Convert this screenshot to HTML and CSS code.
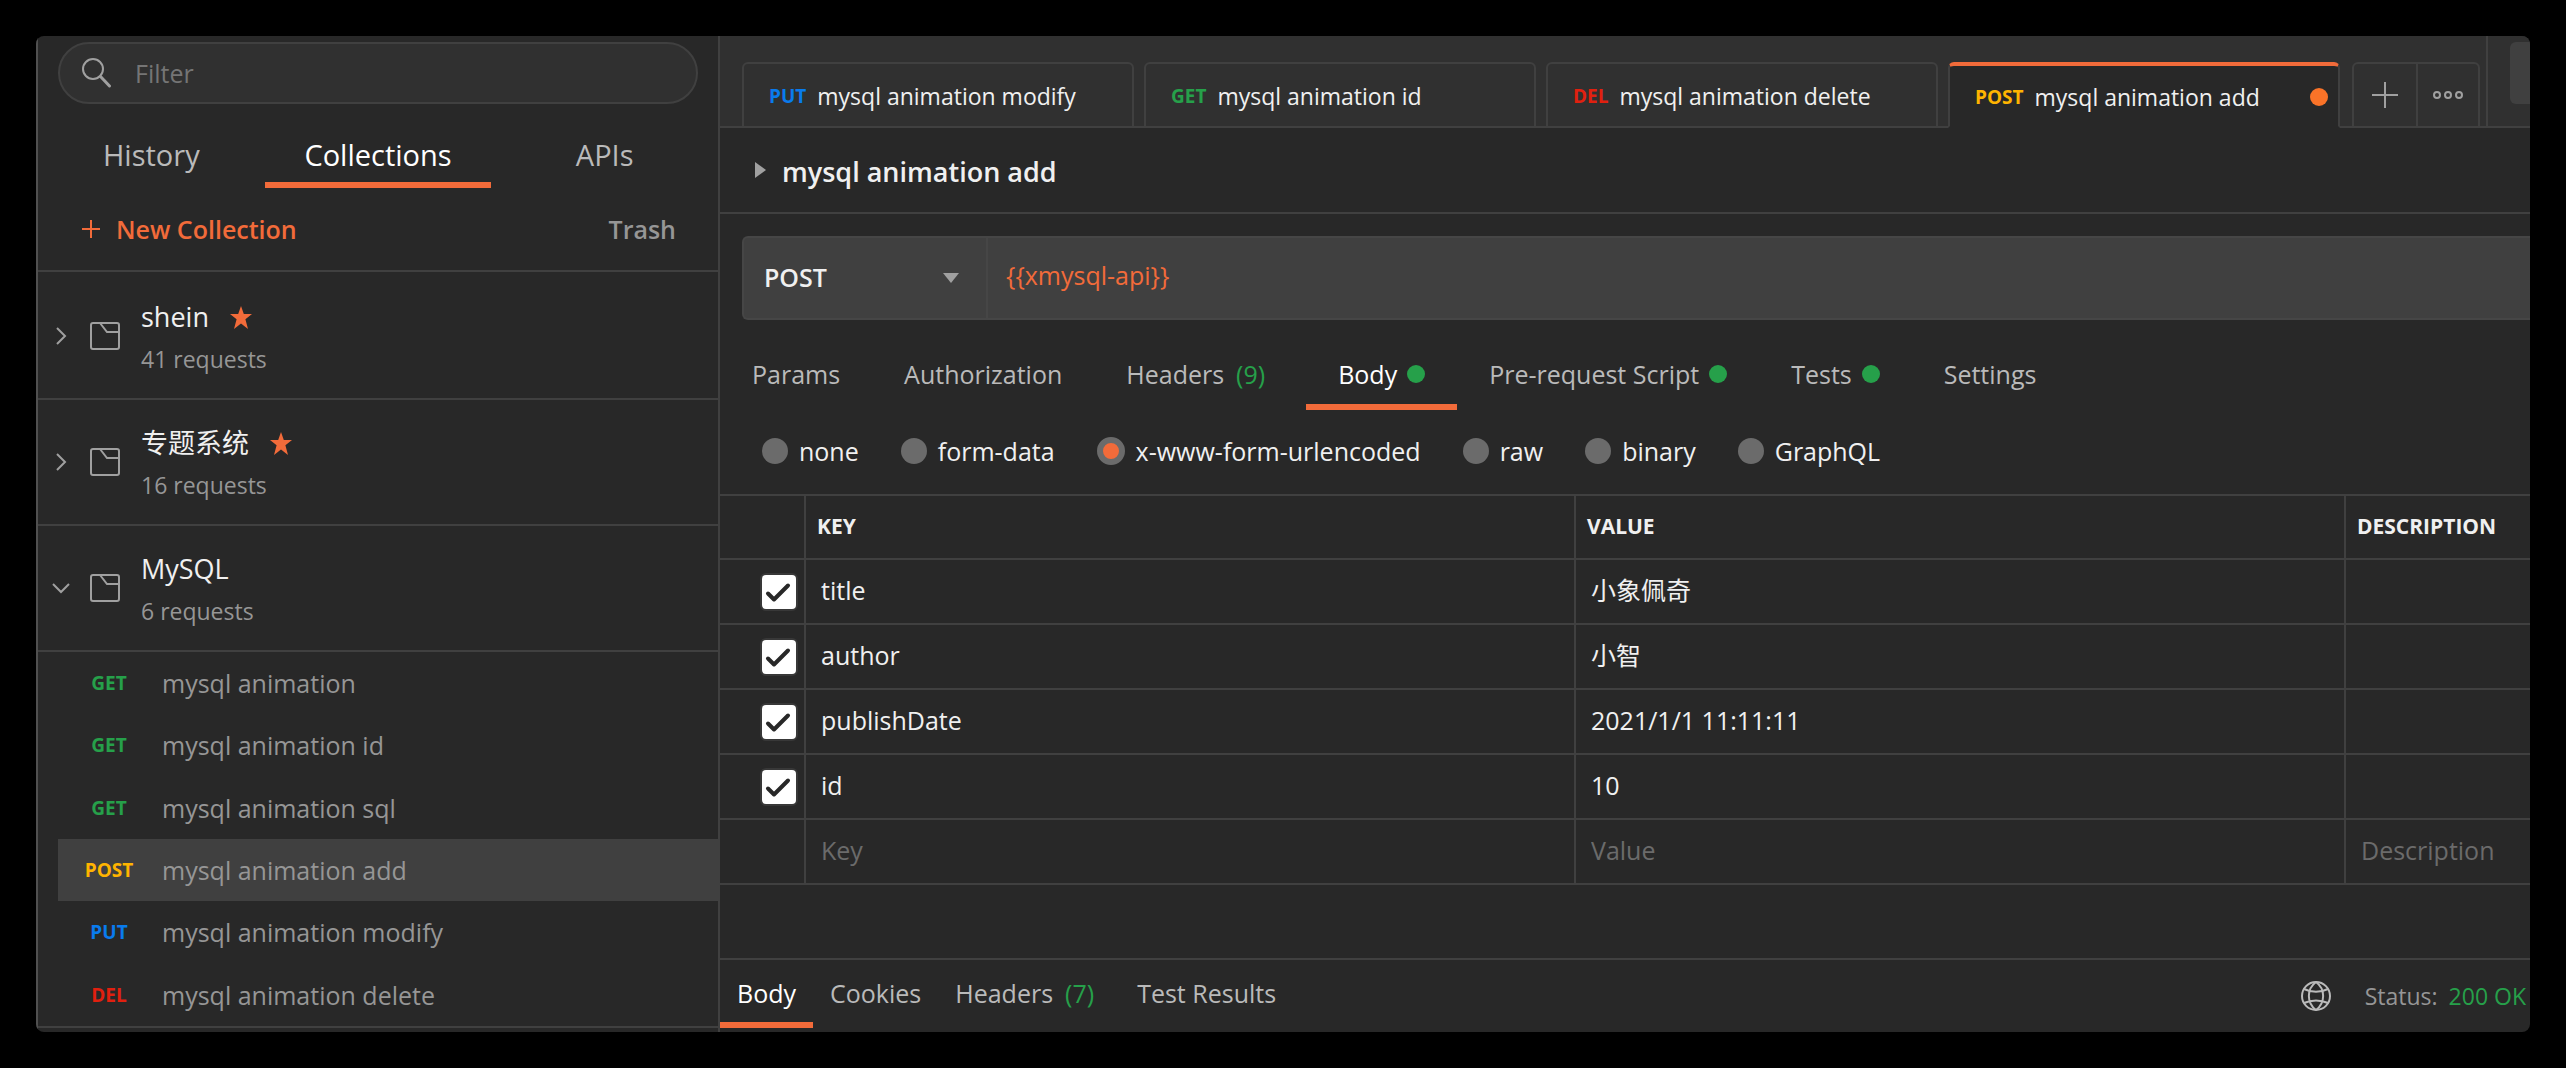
FILE: index.html
```html
<!DOCTYPE html>
<html lang="en">
<head>
<meta charset="utf-8">
<meta name="viewport" content="width=device-width, initial-scale=1">
<title>mysql animation add</title>
<link rel="stylesheet" href="styles.css">
</head>
<body>
<svg class="sprite" aria-hidden="true">
  <symbol id="folder" viewBox="0 0 30 28"><path d="M3 1h24a2 2 0 0 1 2 2v22a2 2 0 0 1-2 2H3a2 2 0 0 1-2-2V3a2 2 0 0 1 2-2zM10 1l7 9h12" fill="none" stroke="currentColor" stroke-width="2"/></symbol>
  <symbol id="star" viewBox="0 0 22 23"><path d="M11 0l2.800 8H22l-6.600 5.200L18 23l-7-5.600L4 23l2.600-9.800L0 8h8.200z" fill="currentColor"/></symbol>
  <symbol id="chevron-right" viewBox="0 0 18 18"><path d="M5 1l8 8-8 8" fill="none" stroke="currentColor" stroke-width="2"/></symbol>
  <symbol id="chevron-down" viewBox="0 0 18 18"><path d="M1 5l8 8 8-8" fill="none" stroke="currentColor" stroke-width="2"/></symbol>
  <symbol id="tick" viewBox="0 0 34 34"><path d="M6 18.500l6 6L26 10.500" fill="none" stroke="currentColor" stroke-width="4" stroke-linecap="round" stroke-linejoin="round"/></symbol>
</svg>
<div class="app">
  <aside class="sidebar">
    <div class="filter">
      <svg class="filter-icon" viewBox="0 0 30 30" aria-hidden="true"><circle cx="11" cy="11" r="10" fill="none" stroke="currentColor" stroke-width="2"/><path d="M18.500 18.500l9 9.500" stroke="currentColor" stroke-width="3" stroke-linecap="round"/></svg>
      <input class="filter-input" type="text" placeholder="Filter" aria-label="Filter">
    </div>
    <nav class="side-tabs">
      <button class="side-tab">History</button>
      <button class="side-tab is-active">Collections</button>
      <button class="side-tab">APIs</button>
    </nav>
    <div class="side-actions">
      <button class="new-collection"><svg class="plus-small" viewBox="0 0 18 18" aria-hidden="true"><path d="M9 0v18M0 9h18" stroke="currentColor" stroke-width="2"/></svg>New Collection</button>
      <button class="trash">Trash</button>
    </div>
    <div class="collections">
      <div class="collection">
        <svg class="chevron"><use href="#chevron-right"/></svg>
        <svg class="folder"><use href="#folder"/></svg>
        <div class="collection-text">
          <div class="collection-name">shein<svg class="star"><use href="#star"/></svg></div>
          <div class="collection-count">41 requests</div>
        </div>
      </div>
      <div class="collection">
        <svg class="chevron"><use href="#chevron-right"/></svg>
        <svg class="folder"><use href="#folder"/></svg>
        <div class="collection-text">
          <div class="collection-name">专题系统<svg class="star"><use href="#star"/></svg></div>
          <div class="collection-count">16 requests</div>
        </div>
      </div>
      <div class="collection">
        <svg class="chevron"><use href="#chevron-down"/></svg>
        <svg class="folder"><use href="#folder"/></svg>
        <div class="collection-text">
          <div class="collection-name">MySQL</div>
          <div class="collection-count">6 requests</div>
        </div>
      </div>
    </div>
    <nav class="requests">
      <a class="request" href="#"><span class="method get">GET</span>mysql animation</a>
      <a class="request" href="#"><span class="method get">GET</span>mysql animation id</a>
      <a class="request" href="#"><span class="method get">GET</span>mysql animation sql</a>
      <a class="request is-active" href="#"><span class="method post">POST</span>mysql animation add</a>
      <a class="request" href="#"><span class="method put">PUT</span>mysql animation modify</a>
      <a class="request" href="#"><span class="method del">DEL</span>mysql animation delete</a>
    </nav>
  </aside>

  <main class="main">
    <div class="tabbar">
      <div class="open-tabs">
        <button class="open-tab"><span class="method put">PUT</span>mysql animation modify</button>
        <button class="open-tab"><span class="method get">GET</span>mysql animation id</button>
        <button class="open-tab"><span class="method del">DEL</span>mysql animation delete</button>
        <button class="open-tab is-active"><span class="method post">POST</span>mysql animation add<span class="unsaved"></span></button>
      </div>
      <div class="tab-tools">
        <button class="tool" aria-label="New tab"><svg class="plus" viewBox="0 0 26 26"><path d="M13 0v26M0 13h26" stroke="currentColor" stroke-width="2"/></svg></button>
        <button class="tool" aria-label="More"><svg class="more" viewBox="0 0 30 10"><g fill="none" stroke="currentColor" stroke-width="2"><circle cx="4" cy="5" r="3"/><circle cx="15" cy="5" r="3"/><circle cx="26" cy="5" r="3"/></g></svg></button>
      </div>
      <div class="environment"><button class="environment-button" aria-label="Environment"></button></div>
    </div>

    <header class="request-title"><span class="disclosure"></span><h1 class="title-text">mysql animation add</h1></header>

    <div class="url-row">
      <div class="method-picker">
        <select class="method-select" aria-label="Method"><option>POST</option><option>GET</option><option>PUT</option></select>
        <span class="caret"></span>
      </div>
      <input class="url-input" type="text" value="{{xmysql-api}}" aria-label="Request URL">
    </div>

    <nav class="request-tabs">
      <button class="request-tab">Params</button>
      <button class="request-tab">Authorization</button>
      <button class="request-tab">Headers<span class="count">(9)</span></button>
      <button class="request-tab is-active">Body<span class="dot"></span></button>
      <button class="request-tab">Pre-request Script<span class="dot"></span></button>
      <button class="request-tab">Tests<span class="dot"></span></button>
      <button class="request-tab">Settings</button>
    </nav>

    <div class="body-modes">
      <label class="mode"><input class="radio" type="radio" name="mode">none</label>
      <label class="mode"><input class="radio" type="radio" name="mode">form-data</label>
      <label class="mode"><input class="radio" type="radio" name="mode" checked>x-www-form-urlencoded</label>
      <label class="mode"><input class="radio" type="radio" name="mode">raw</label>
      <label class="mode"><input class="radio" type="radio" name="mode">binary</label>
      <label class="mode"><input class="radio" type="radio" name="mode">GraphQL</label>
    </div>

    <table class="params">
      <colgroup><col class="col-check"><col><col><col class="col-description"></colgroup>
      <thead>
        <tr><th></th><th>KEY</th><th>VALUE</th><th>DESCRIPTION</th></tr>
      </thead>
      <tbody>
        <tr><td class="check-cell"><span class="check"><input class="checkbox" type="checkbox" checked aria-label="title"><svg class="tick"><use href="#tick"/></svg></span></td><td>title</td><td>小象佩奇</td><td></td></tr>
        <tr><td class="check-cell"><span class="check"><input class="checkbox" type="checkbox" checked aria-label="author"><svg class="tick"><use href="#tick"/></svg></span></td><td>author</td><td>小智</td><td></td></tr>
        <tr><td class="check-cell"><span class="check"><input class="checkbox" type="checkbox" checked aria-label="publishDate"><svg class="tick"><use href="#tick"/></svg></span></td><td>publishDate</td><td>2021/1/1 11:11:11</td><td></td></tr>
        <tr><td class="check-cell"><span class="check"><input class="checkbox" type="checkbox" checked aria-label="id"><svg class="tick"><use href="#tick"/></svg></span></td><td>id</td><td>10</td><td></td></tr>
        <tr><td></td><td><input class="cell-input" type="text" placeholder="Key" aria-label="Key"></td><td><input class="cell-input" type="text" placeholder="Value" aria-label="Value"></td><td><input class="cell-input" type="text" placeholder="Description" aria-label="Description"></td></tr>
      </tbody>
    </table>

    <footer class="response-bar">
      <button class="response-tab is-active">Body</button>
      <button class="response-tab">Cookies</button>
      <button class="response-tab">Headers<span class="count">(7)</span></button>
      <button class="response-tab">Test Results</button>
      <div class="status">
        <svg class="globe" viewBox="0 0 30 30" aria-hidden="true"><g fill="none" stroke="currentColor" stroke-width="2"><circle cx="15" cy="15" r="14"/><path d="M15 1C5.500 8 5.500 22 15 29M15 1c9.500 7 9.500 21 0 28M3 8c7 3.500 17 3.500 24 0M3 22c7-3.500 17-3.500 24 0"/></g></svg>
        <span class="status-label">Status:</span><span class="status-value">200 OK</span>
      </div>
    </footer>
  </main>
</div>
</body>
</html>
```
FILE: styles.css
```css
:root {
  --bg: #282828;
  --bg-raised: #303030;
  --line: #404040;
  --text: #f0f0f0;
  --text-soft: #bababa;
  --text-dim: #969696;
  --text-faint: #6b6b6b;
  --orange: #f26b3a;
  --green: #26a04a;
}

* { box-sizing: border-box; }

body {
  margin: 0;
  padding: 36px;
  min-height: 100vh;
  display: flex;
  background: #000;
  color: var(--text);
  font: 25px/34px "Open Sans", "Noto Sans CJK SC", sans-serif;
}

button, input, select {
  margin: 0;
  padding: 0;
  border: 0;
  background: none;
  color: inherit;
  font: inherit;
}

.sprite { position: absolute; width: 0; height: 0; }

.app {
  flex: 1;
  min-width: 0;
  display: flex;
  background: var(--bg);
  border-radius: 8px;
  overflow: hidden;
}

/* Sidebar */
.sidebar {
  flex: 0 0 684px;
  display: flex;
  flex-direction: column;
  border-left: 2px solid #505050;
  border-right: 2px solid var(--line);
  padding-bottom: 4px;
}

.filter {
  display: flex;
  align-items: center;
  gap: 23px;
  height: 62px;
  margin: 6px 20px 0;
  padding: 0 22px;
  background: var(--bg-raised);
  border: 2px solid var(--line);
  border-radius: 31px;
}

.filter-icon { width: 30px; height: 30px; color: #a0a0a0; }
.filter-input { flex: 1; min-width: 0; outline: 0; }
.filter-input::placeholder { color: #757575; opacity: 1; }

.side-tabs { display: flex; margin-top: 24px; }

.side-tab {
  flex: 1;
  height: 60px;
  border-bottom: 6px solid transparent;
  color: var(--text-soft);
  font-size: 29px;
}

.side-tab.is-active, .request-tab.is-active, .response-tab.is-active {
  color: #fff;
  border-bottom-color: var(--orange);
}

.side-actions {
  display: flex;
  justify-content: space-between;
  align-items: center;
  height: 84px;
  padding: 0 42px 0 44px;
  border-bottom: 2px solid var(--line);
  font-weight: 600;
}

.new-collection { display: flex; align-items: center; gap: 16px; color: var(--orange); }
.plus-small { width: 18px; height: 18px; }
.trash { color: var(--text-dim); }

.collections { padding-top: 2px; }

.collection {
  display: flex;
  align-items: center;
  height: 126px;
  padding-left: 14px;
  border-bottom: 2px solid var(--line);
  color: #a0a0a0;
}

.chevron { width: 18px; height: 18px; }
.folder { width: 30px; height: 28px; margin: 0 21px 0 20px; }
.collection-text { margin-top: 4px; line-height: 42px; }
.collection-name { display: flex; align-items: center; gap: 21px; height: 42px; color: var(--text); font-size: 27px; }
.star { width: 22px; height: 23px; color: var(--orange); }
.collection-count { color: var(--text-dim); font-size: 23px; }

.requests {
  flex: 1;
  display: grid;
  grid-auto-rows: minmax(60px, 1fr);
  border-bottom: 2px solid var(--line);
}

.request {
  display: flex;
  align-items: center;
  gap: 16px;
  margin: 0 -2px 0 20px;
  padding-left: 14px;
  color: var(--text-dim);
  text-decoration: none;
}

.request.is-active { background: var(--line); }
.request .method { width: 74px; text-align: center; }

.method { font-size: 19px; font-weight: 700; }
.get { color: var(--green); }
.post { color: #ffb400; }
.put { color: #097bed; }
.del { color: #e1200f; }

/* Open request tabs */
.main { flex: 1; min-width: 0; display: flex; flex-direction: column; }

.tabbar {
  display: flex;
  align-items: flex-end;
  height: 92px;
  background: var(--bg-raised);
  box-shadow: inset 0 -2px var(--line);
}

.open-tabs { flex: 0 1 1598px; min-width: 0; display: flex; gap: 10px; margin-left: 22px; }

.open-tab {
  flex: 1;
  min-width: 0;
  display: flex;
  align-items: center;
  gap: 11px;
  height: 66px;
  padding: 2px 10px 0 25px;
  border: 2px solid var(--line);
  border-radius: 6px 6px 0 0;
  font-size: 23px;
  white-space: nowrap;
}

.open-tab.is-active {
  background: var(--bg);
  border-top: 4px solid var(--orange);
  border-bottom: 2px solid var(--bg);
}

.unsaved { width: 18px; height: 18px; margin-left: auto; border-radius: 50%; background: #fa7328; }

.tab-tools {
  display: flex;
  height: 66px;
  margin-left: 12px;
  border: 2px solid var(--line);
  border-radius: 6px 6px 0 0;
  color: #a0a0a0;
}

.tool { display: flex; align-items: center; justify-content: center; width: 62px; }
.tool + .tool { border-left: 2px solid var(--line); }
.plus { width: 26px; height: 26px; }
.more { width: 30px; height: 10px; }

.environment {
  flex: 0 0 44px;
  align-self: stretch;
  margin-left: auto;
  padding: 6px 0 0 22px;
  border-left: 2px solid var(--line);
}

.environment-button { display: block; width: 100%; height: 62px; border-radius: 6px 0 0 6px; background: var(--line); }

/* Request */
.request-title {
  display: flex;
  align-items: center;
  gap: 16px;
  height: 86px;
  padding-left: 35px;
  border-bottom: 2px solid var(--line);
}

.disclosure { border: 8px solid transparent; border-left: 11px solid #a0a0a0; border-right: 0; }
.title-text { margin: 0; padding-top: 3px; font-size: 27px; font-weight: 600; }

.url-row {
  display: flex;
  height: 84px;
  margin: 22px 0 0 22px;
  background: var(--line);
  border: 2px solid #464646;
  border-right: 0;
  border-radius: 6px 0 0 6px;
}

.method-picker {
  flex: 0 0 244px;
  display: grid;
  align-items: center;
  border-right: 2px solid #464646;
}

.method-select {
  grid-area: 1 / 1;
  height: 100%;
  padding: 0 0 3px 20px;
  appearance: none;
  font-weight: 600;
}

.caret {
  grid-area: 1 / 1;
  justify-self: end;
  margin-right: 27px;
  border: 8px solid transparent;
  border-top: 10px solid #a0a0a0;
  border-bottom: 0;
  pointer-events: none;
}

.url-input { flex: 1; min-width: 0; padding: 0 0 6px 18px; color: var(--orange); }

.request-tabs { display: flex; margin-top: 24px; }

.request-tab, .response-tab {
  display: flex;
  align-items: center;
  gap: 10px;
  border-bottom: 6px solid transparent;
  color: var(--text-soft);
  white-space: nowrap;
}

.request-tab { height: 66px; padding: 0 32px; }
.count { margin: 0 9px 0 2px; color: var(--green); }
.dot { width: 18px; height: 18px; border-radius: 50%; background: var(--green); }

.body-modes {
  display: flex;
  align-items: center;
  gap: 42px;
  height: 84px;
  padding: 0 0 2px 42px;
}

.mode { display: flex; align-items: center; gap: 11px; }

.radio {
  appearance: none;
  width: 26px;
  height: 26px;
  border-radius: 50%;
  background: var(--text-faint);
}

.radio:checked { width: 28px; height: 28px; border: 6px solid var(--text-faint); background: var(--orange); }

/* Form table */
.params {
  width: 100%;
  table-layout: fixed;
  border-collapse: separate;
  border-spacing: 0;
  border-top: 2px solid var(--line);
}

.col-check { width: 86px; }
.col-description { width: 184px; }

.params th, .params td {
  height: 65px;
  padding: 0 0 3px 15px;
  border-bottom: 2px solid var(--line);
  border-right: 2px solid var(--line);
  text-align: left;
  vertical-align: middle;
}

.params th { height: 64px; padding-left: 11px; font-size: 21px; font-weight: 700; }
.params th:last-child, .params td:last-child { border-right: 0; }
.params .check-cell { padding: 0 0 0 42px; }

.check { display: grid; width: 34px; height: 34px; }
.checkbox { grid-area: 1 / 1; appearance: none; border-radius: 4px; background: #fff; box-shadow: 0 0 0 2px #383838; }
.tick { grid-area: 1 / 1; width: 34px; height: 34px; color: var(--bg); pointer-events: none; }

.cell-input { display: block; width: 100%; }
.cell-input::placeholder { color: var(--text-faint); opacity: 1; }

/* Response */
.response-bar {
  display: flex;
  margin-top: auto;
  padding: 4px 4px 4px 0;
  border-top: 2px solid var(--line);
}

.response-tab { height: 64px; padding: 0 17px; }

.status {
  display: flex;
  align-items: center;
  margin-left: auto;
  font-size: 23px;
}

.globe { width: 30px; height: 30px; margin-right: 34px; color: var(--text-soft); }
.status-label { margin-right: 11px; color: var(--text-dim); }
.status-value { color: var(--green); }
```
